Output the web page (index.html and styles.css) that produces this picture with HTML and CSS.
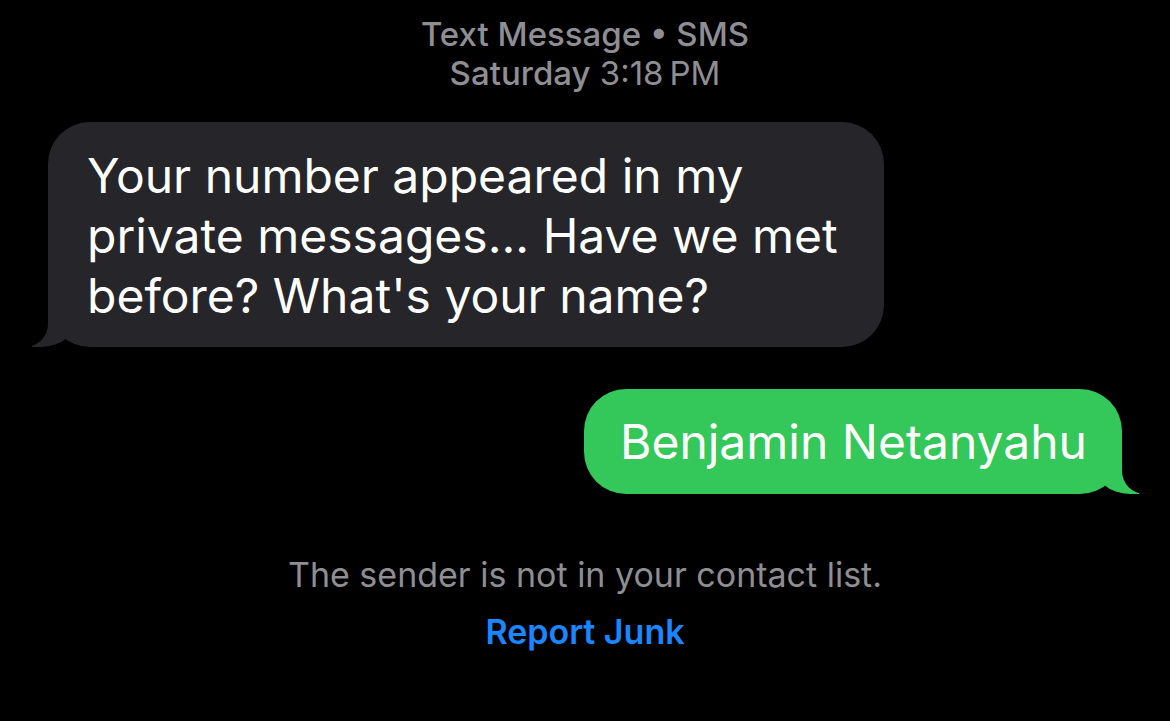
FILE: index.html
```
<!DOCTYPE html>
<html lang="en">
<head>
    <meta charset="UTF-8">
    <meta name="viewport" content="width=device-width, initial-scale=1.0">
    <title>Messages</title>
    <link rel="stylesheet" href="styles.css">
</head>
<body>
    <main class="thread">
        <header class="thread-head">
            <div class="service">Text Message &bull; SMS</div>
            <div class="stamp"><span class="day">Saturday</span> 3:18&#8239;PM</div>
        </header>

        <section class="messages">
            <div class="bubble them">Your number appeared in my private messages... Have we met before? What's your name?</div>
            <div class="bubble me">Benjamin Netanyahu</div>
        </section>

        <footer class="junk">
            <p class="notice">The sender is not in your contact list.</p>
            <a href="#" class="report">Report Junk</a>
        </footer>
    </main>
</body>
</html>
```

FILE: styles.css
```
body {
    margin: 0;
    background: #000;
    font-family: Inter, "Noto Sans", sans-serif;
    color: #fff;
}
.thread {
    width: 1170px;
    height: 721px;
    overflow: hidden;
}
.thread-head {
    text-align: center;
    color: #8e8e93;
    font-size: 33px;
    line-height: 39px;
    padding-top: 15px;
}
.service, .day {
    font-weight: 500;
}
.messages {
    display: flex;
    flex-direction: column;
    gap: 42px;
    margin-top: 29px;
}
.bubble {
    position: relative;
    box-sizing: border-box;
    border-radius: 42px;
}
.them {
    align-self: flex-start;
    margin-left: 48px;
    width: 836px;
    padding: 24px 30px 21px 39px;
    background: #26252a;
    font-size: 48px;
    line-height: 60px;
}
.me {
    align-self: flex-end;
    margin-right: 48px;
    padding: 22px 35px 21px 36px;
    background: #34c759;
    font-size: 48px;
    line-height: 62px;
}
/* tails */
.bubble::before, .bubble::after {
    content: "";
    position: absolute;
    bottom: 0;
    height: 57px;
}
.them::before {
    left: -16px;
    width: 46px;
    background: #26252a;
    border-bottom-right-radius: 37px 32px;
}
.them::after {
    left: -60px;
    width: 60px;
    background: #000;
    border-bottom-right-radius: 23px;
}
.me::before {
    right: -17px;
    width: 46px;
    background: #34c759;
    border-bottom-left-radius: 37px 32px;
}
.me::after {
    right: -60px;
    width: 60px;
    background: #000;
    border-bottom-left-radius: 23px;
}
.junk {
    text-align: center;
    margin-top: 61px;
}
.notice {
    margin: 0;
    color: #8e8e93;
    font-size: 34px;
    line-height: 40px;
}
.report {
    display: inline-block;
    margin-top: 17px;
    color: #1a86ff;
    font-size: 34px;
    line-height: 40px;
    font-weight: 600;
    text-decoration: none;
}
```
